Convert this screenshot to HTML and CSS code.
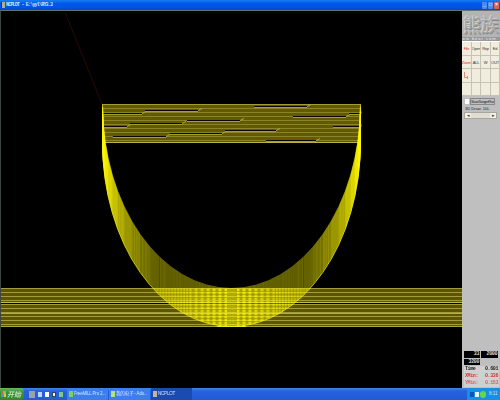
FILE: index.html
```html
<!DOCTYPE html>
<html>
    <head>
        <meta charset="utf-8">
        <title>NCPLOT</title>
        <link rel="stylesheet" href="styles.css">
    </head>
    <body>
        <div id="Title">
            <i class="appicon"></i><span>NCPLOT - E:\yyl\RY3.3</span>
            <div class="winbuttons"><i>_</i><i>□</i><i class="close">×</i></div>
        </div>
        <div id="Main">
            <canvas id="Plot" width="461" height="377"></canvas>
            <div id="Side">
                <div class="logo">熊族</div>
                <div class="strip">ww bear com</div>
                <div class="tools">
                    <b class="red">File</b><b>Open</b><b>Rep</b><b>Ed</b>
                    <b class="red">Zoom</b><b>ALL</b><b>W</b><b>OUT</b>
                    <b><svg width="7" height="8" viewBox="0 0 7 8"><path d="M1.5 0v5.5H5M4.5 4v3" fill="none" stroke="#dc8c78"/></svg></b><b></b><b></b><b></b>
                    <b></b><b></b><b></b><b></b>
                </div>
                <div class="check"><i></i><span>ScanTangerRuck</span></div>
                <div class="label">3D Draw: 10L</div>
                <div class="scroll"><i>◂</i><i>▸</i></div>
                <div class="readout">
                    <div class="nums"><span>33</span><span>2000</span><span>3200</span></div>
                    <p><span>Time</span><span>0.601</span></p>
                    <p class="red"><span>XMin:</span><span>0.336</span></p>
                    <p class="pink"><span>YMin:</span><span>0.153</span></p>
                </div>
            </div>
        </div>
        <div id="Taskbar">
            <div class="start"><i></i>开始</div>
            <div class="quick">
                <i class="q1"></i><i class="q2"></i><i class="q3"></i><i class="q4"></i><i class="q5"></i>
            </div>
            <div class="task"><i></i>FreeMILL Pro 2...</div>
            <div class="task second"><i></i>我的电子 - Ado...</div>
            <div class="task active"><i></i>NCPLOT</div>
            <div class="tray"><i class="t1"></i><i class="t2"></i><i class="t3"></i><span>8:11</span></div>
        </div>
        <script src="plot.js"></script>
    </body>
</html>
```
FILE: styles.css
```css
*         { box-sizing: border-box; margin: 0; padding: 0; }
body      { width: 500px; height: 400px; overflow: hidden; background: #000; font-family: "Liberation Sans", "Noto Sans CJK SC", sans-serif; display: flex; flex-direction: column; }
i         { font-style: normal; }

#Title    { height: 10px; flex: none; display: flex; align-items: center; background: linear-gradient(#1780f5, #0057e8 35%, #0054e4 80%, #0849b4); color: #d5e5ff; font: bold 5px/9px "Liberation Mono", monospace; letter-spacing: -0.8px; padding-left: 1px; }
.appicon  { width: 4px; height: 6px; background: #b5ab91; border-left: 1px solid #333; margin-right: 1px; }
.winbuttons         { margin-left: auto; display: flex; gap: 1px; padding-right: 1px; letter-spacing: 0; }
.winbuttons i       { width: 5px; height: 7px; background: #4b88f2; color: #fff; font-size: 5px; line-height: 6px; text-align: center; border-radius: 1px; }
.winbuttons .close  { background: #df6448; }

#Main     { height: 378px; display: flex; border-top: 1px solid #69756c; border-left: 1px solid #3d4545; }
#Plot     { display: block; flex: none; background: #000; }
#Side     { width: 38px; background: #bfbfbf; display: flex; flex-direction: column; }
.logo     { height: 26px; padding-left: 1px; background: #b4b4b4; color: #a6a6a6; text-shadow: -1px -1px 0 #d2d2d2, 1px 1px 0 #858585; font: 18px/26px "Noto Sans CJK SC", sans-serif; white-space: nowrap; overflow: hidden; }
.strip    { height: 4px; color: #eee; background: #999; font-size: 4px; line-height: 4px; overflow: hidden; white-space: nowrap; letter-spacing: 1px; }
.tools    { height: 55px; display: grid; grid-template-columns: 10px 9px 10px 9px; grid-template-rows: 14px 13px 14px 13px; background: #f0ecde; border-top: 1px solid #fff; }
.tools b  { border-right: 1px solid #c8c2b2; border-bottom: 1px solid #c8c2b2; font-size: 4px; font-weight: normal; color: #333; display: flex; align-items: center; justify-content: center; overflow: hidden; letter-spacing: -0.2px; }
.tools .red  { color: #dc3827; }
.check    { height: 8px; margin-top: 1px; display: flex; align-items: center; font-size: 4px; white-space: nowrap; color: #222; padding-left: 3px; }
.check i  { width: 4px; height: 5px; background: #fff; margin-right: 1px; }
.check span  { border: 1px solid #888; line-height: 5px; width: 25px; overflow: hidden; letter-spacing: -0.4px; }
.label    { font-size: 4px; line-height: 7px; height: 7px; padding-left: 3px; color: #222; }
.scroll   { display: flex; justify-content: space-between; width: 33px; height: 7px; margin-left: 2px; background: #dedcd3; border: 1px solid #aaa69b; }
.scroll i { width: 6px; background: #f3f0e5; font-size: 5px; line-height: 5px; text-align: center; color: #444; }
.readout  { margin-top: auto; height: 37px; padding: 0 1px 0 2px; font: bold 5px/7px "Liberation Mono", monospace; letter-spacing: -0.4px; color: #222; }
.nums     { display: grid; grid-template-columns: 16px 17px; grid-template-rows: 7px 6px; gap: 1px; height: 14px; margin-bottom: 1px; }
.nums span   { background: #000; color: #ddd; text-align: right; line-height: 7px; padding-right: 1px; overflow: hidden; }
.readout p   { display: flex; justify-content: space-between; height: 7px; background: #d0d0d0; padding: 0 1px; }
.readout p.red   { color: #d6392f; }
.readout p.pink  { color: #e65b68; }

#Taskbar  { height: 12px; flex: none; display: flex; align-items: stretch; background: linear-gradient(#4487ee, #2662dc 25%, #235bd6); color: #d2e2ff; font-size: 4.5px; line-height: 12px; white-space: nowrap; }
.start    { width: 24px; background: linear-gradient(#6cb763, #3b913b 35%, #36852f); border-radius: 0 4px 4px 0; color: #c9dfbd; font: italic bold 7px/11px "Noto Sans CJK SC", sans-serif; display: flex; align-items: center; overflow: hidden; }
.start i  { width: 5px; height: 6px; margin: 0 1px; background: conic-gradient(#8fc34d 25%, #e5c94d 0 50%, #5590d8 0 75%, #d0613b 0); }
.quick    { width: 43px; display: flex; align-items: center; gap: 3px; padding-left: 5px; }
.quick i  { width: 4px; height: 5px; background: #b9d9ff; }
.quick .q1   { width: 6px; height: 7px; background: #99a1a4; }
.quick .q3   { background: #fff; }
.quick .q4   { background: #eee; border: 1px solid #345; }
.quick .q5   { background: #83c684; }
.task     { width: 41px; margin-right: 1px; padding-left: 2px; background: #3c7fec; display: flex; align-items: center; overflow: hidden; letter-spacing: -0.2px; }
.task i   { width: 4px; height: 6px; flex: none; background: #7fce6e; margin-right: 1px; }
.second i { background: #b6e184; }
.active   { background: #1c4bb0; }
.active i { background: #bcb6a5; }
.tray     { margin-left: auto; width: 33px; background: #1690e4; display: flex; align-items: center; gap: 1px; padding-left: 3px; }
.tray i   { width: 4px; height: 5px; background: #174fb4; }
.tray .t2 { background: #e2f4ff; }
.tray .t3 { width: 6px; height: 7px; background: #65d653; border-radius: 3px; }
.tray span   { margin-left: 2px; }
```
FILE: plot.js
```javascript
var canvas = document.getElementById("Plot");
var ctx = canvas.getContext("2d");
ctx.translate(-1, -11); // draw in window coordinates

var left = 102, right = 361, top0 = 104, depth = 184, passes = 38;
var cx = (left + right) / 2, rx = (right - left) / 2;

function row(x1, x2, y, color)
{
    ctx.fillStyle = color;
    ctx.fillRect(x1, y, x2 - x1, 1);
}

// bottom plane
for (var i = 0; i <= passes; i++)
{
    row(0, 462, 288 + i, i % 4 == 0 ? "#a19c3c" : "#5e5500");
}
row(0, 462, 303, "#000");
row(0, 462, 302, "#c4be4b");
row(0, 462, 313, "#b4ae43");
row(0, 462, 326, "#a9a43b");

// top plane
for (var i = 0; i <= passes; i++)
{
    row(left, right, top0 + i, i % 4 == 0 ? "#89842a" : "#625900");
}
row(left, right, 104, "#a39d31");
row(left, right, 142, "#b8b247");

// gaps where the passes step up one line: x from, x to, y
var gaps = [[102,142,113],[145,198,110],[254,307,106],[102,127,126],[130,182,123],
            [187,240,120],[293,346,116],[349,361,113],[113,166,136],[170,222,133],
            [225,276,130],[333,361,126],[266,316,140]];
gaps.forEach(function (g)
{
    row(g[0], g[1], g[2], "#080800");
    row(g[0], g[1], g[2] + 1, "#a49f33");
    ctx.strokeStyle = "#b0aa38";
    ctx.beginPath();
    ctx.moveTo(g[1], g[2] + 0.5);
    ctx.lineTo(Math.min(g[1] + 4, right), g[2] - 1.5);
    ctx.stroke();
});

// arcs of the cylinder
ctx.lineWidth = 1;
for (var k = 0; k <= passes; k++)
{
    ctx.strokeStyle = k == passes ? "rgba(255,250,20,0.75)" : "rgba(255,247,0,0.42)";
    ctx.beginPath();
    ctx.ellipse(cx, top0 + k + 0.5, rx - 0.5, depth, 0, 0, Math.PI);
    ctx.stroke();
}

// interference between the arcs and the plane
for (var y = 288; y < 326; y++)
{
    var t = (y - top0 - passes) / depth;
    var half = Math.sqrt(Math.max(0, 1 - t * t)) * rx;
    for (var x = Math.ceil(cx - half); x < cx + half; x++)
    {
        var d = Math.abs(x - cx);
        var wave = Math.cos(d * (d < 42 ? 1.05 : 2.1)) * 0.5 + 0.5;
        if (d < 5) wave = y % 3 ? 0.1 : 0.6;
        var a = (0.15 + wave * 0.85) * (y % 3 == 0 ? 0.35 : 0.85) * Math.max(0.35, 1 - d / 120);
        ctx.fillStyle = "rgba(255,250,0," + a + ")";
        ctx.fillRect(x, y, 1, 1);
    }
}
row(217, 246, 326, "#f1ec24");

// rapid move
ctx.strokeStyle = "#2c0808";
ctx.beginPath();
ctx.moveTo(65, 12);
ctx.lineTo(102, 104);
ctx.stroke();
```
